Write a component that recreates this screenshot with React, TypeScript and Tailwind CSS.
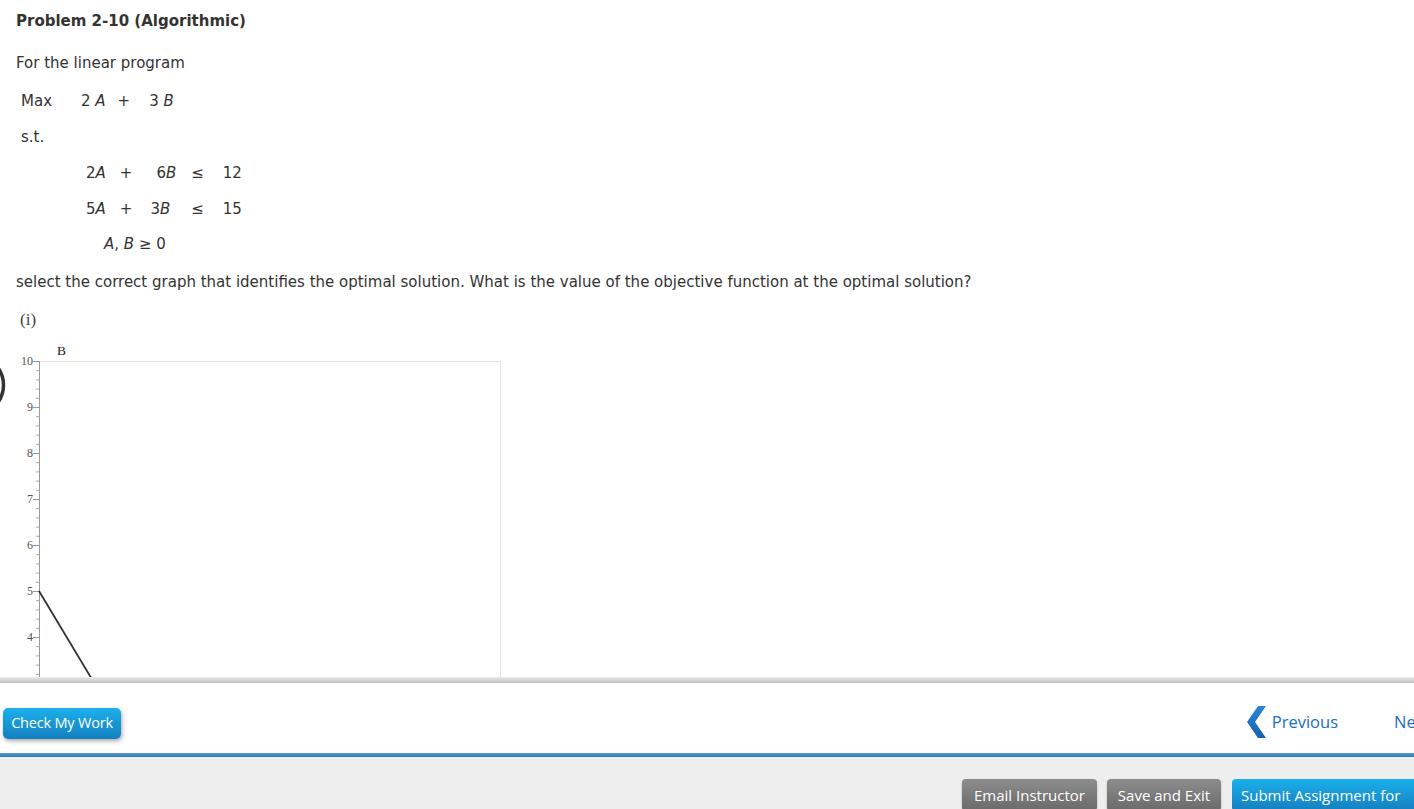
import React from "react";

const verdana = { fontFamily: '"DejaVu Sans", Verdana, sans-serif' };

function Graph() {
  const unit = 46;
  const y0 = 21;
  const yFor = (v: number) => y0 + (10 - v) * unit;
  const majors = [10, 9, 8, 7, 6, 5, 4];
  const minors: number[] = [];
  for (let i = 0; i <= 50; i++) minors.push(y0 + i * (unit / 5));
  return (
    <svg width="510" height="340" className="block" style={{ overflow: "hidden" }}>
      <circle cx={-26.5} cy={45} r={30} fill="none" stroke="#333" strokeWidth={3.5} />
      <line x1={40} y1={y0 + 0.5} x2={500} y2={y0 + 0.5} stroke="#e4e4e4" strokeWidth={1} />
      <line x1={500.5} y1={y0} x2={500.5} y2={340} stroke="#e2e2e2" strokeWidth={1} />
      <line x1={39.5} y1={y0} x2={39.5} y2={340} stroke="#9a9a9a" strokeWidth={1} />
      {minors.map((y, i) => (
        <line key={i} x1={36} y1={y + 0.5} x2={39} y2={y + 0.5} stroke="#a8a8a8" strokeWidth={1} />
      ))}
      {[...majors, 3].map((v) => (
        <line key={"t" + v} x1={33} y1={yFor(v) + 0.5} x2={39} y2={yFor(v) + 0.5} stroke="#9a9a9a" strokeWidth={1} />
      ))}
      {majors.map((v) => (
        <text
          key={v}
          x={33}
          y={yFor(v) + 4}
          textAnchor="end"
          fontSize={12}
          fill="#555"
          fontFamily='"Liberation Serif", "Times New Roman", serif'
        >
          {v}
        </text>
      ))}
      <text x={57} y={15} fontSize={13.5} fill="#222" fontFamily='"Liberation Serif", "Times New Roman", serif'>
        B
      </text>
      <line x1={39} y1={yFor(5)} x2={39 + 3 * unit} y2={yFor(0)} stroke="#333" strokeWidth={1.8} />
    </svg>
  );
}

function ChevronLeft() {
  return (
    <svg width="19" height="32" viewBox="0 0 19 32" className="block">
      <defs>
        <linearGradient id="chev" x1="0" y1="0" x2="0" y2="1">
          <stop offset="0" stopColor="#2a86d8" />
          <stop offset="1" stopColor="#1560b4" />
        </linearGradient>
      </defs>
      <polygon points="11,0 19,0 8,16 19,32 11,32 0,16" fill="url(#chev)" />
    </svg>
  );
}

function ChevronRight() {
  return (
    <svg width="19" height="32" viewBox="0 0 19 32" className="block">
      <polygon points="0,0 8,0 19,16 8,32 0,32 11,16" fill="#1a6ec4" />
    </svg>
  );
}

export default function App() {
  const btnFont = { fontFamily: '"Open Sans", "Noto Sans", sans-serif' };
  return (
    <div className="w-[1414px] h-[809px] overflow-hidden bg-white flex flex-col">
      {/* Content */}
      <div className="h-[677px] overflow-hidden text-[#333] text-[15px]" style={verdana}>
        <div className="pl-[16px]">
          <div className="pt-[11px] text-[15px] leading-[20px] font-bold">Problem 2-10 (Algorithmic)</div>
          <div className="mt-[22px] leading-[20px]">For the linear program</div>
          <div className="mt-[18px] leading-[20px] flex pl-[5px] whitespace-pre">
            <span>Max</span>
            <span className="ml-[29px]">
              2 <i>A</i>
            </span>
            <span className="ml-[12px]">+</span>
            <span className="ml-[19px]">
              3 <i>B</i>
            </span>
          </div>
          <div className="mt-[16px] leading-[20px] pl-[5px]">s.t.</div>
          <div className="mt-[16px] leading-[20px] flex pl-[70px]">
            <span>
              2<i>A</i>
            </span>
            <span className="ml-[14px]">+</span>
            <span className="ml-[24px]">
              6<i>B</i>
            </span>
            <span className="ml-[15px]">≤</span>
            <span className="ml-[19px]">12</span>
          </div>
          <div className="mt-[16px] leading-[20px] flex pl-[70px]">
            <span>
              5<i>A</i>
            </span>
            <span className="ml-[14px]">+</span>
            <span className="ml-[18px]">
              3<i>B</i>
            </span>
            <span className="ml-[21px]">≤</span>
            <span className="ml-[19px]">15</span>
          </div>
          <div className="mt-[15px] leading-[20px] pl-[88px]">
            <i>A</i>, <i>B</i> ≥ 0
          </div>
          <div className="mt-[18px] leading-[20px]">
            select the correct graph that identifies the optimal solution. What is the value of the objective function
            at the optimal solution?
          </div>
          <div
            className="mt-[18px] leading-[20px] pl-[4px] text-[17px] text-[#444]"
            style={{ fontFamily: '"Liberation Serif", "Times New Roman", serif' }}
          >
            (i)
          </div>
        </div>
        <div className="mt-[10px]">
          <Graph />
        </div>
      </div>

      {/* Shadow band */}
      <div className="h-[6px] bg-gradient-to-b from-[#ececec] to-[#bdbdbd]" />

      {/* White toolbar */}
      <div className="h-[70px] bg-white flex items-center overflow-hidden" style={btnFont}>
        <button className="ml-[3px] mt-[10px] h-[31px] w-[118px] rounded-[5px] bg-gradient-to-b from-[#1bb0ec] to-[#157fbf] text-white text-[14.5px] tracking-[-0.2px] shadow-[1px_2px_4px_rgba(0,0,0,0.35)] shrink-0">
          Check My Work
        </button>
        <div className="ml-auto flex items-center shrink-0 mt-[8px]">
          <ChevronLeft />
          <span className="ml-[6px] text-[16.5px] text-[#1a6ec4]">Previous</span>
        </div>
        <div className="ml-[56px] w-[20px] overflow-hidden shrink-0 mt-[8px] flex items-center whitespace-nowrap">
          <span className="text-[16.5px] text-[#1a6ec4]">Next</span>
          <span className="ml-[7px]">
            <ChevronRight />
          </span>
        </div>
      </div>

      {/* Blue rule */}
      <div className="h-[4px] bg-gradient-to-b from-[#5a9cc4] to-[#2f7bb0]" />

      {/* Gray bottom bar */}
      <div className="flex-1 bg-[#eeeeee] overflow-hidden" style={btnFont}>
        <div className="flex justify-end items-start pt-[22px] gap-[10px] whitespace-nowrap">
          <button className="h-[32px] w-[135px] rounded-[4px] bg-gradient-to-b from-[#8d8d8d] to-[#6a6a6a] text-white text-[15px] shrink-0 shadow-[0_1px_2px_rgba(0,0,0,0.3)]">
            Email Instructor
          </button>
          <button className="h-[32px] w-[114px] rounded-[4px] bg-gradient-to-b from-[#8d8d8d] to-[#6a6a6a] text-white text-[15px] shrink-0 shadow-[0_1px_2px_rgba(0,0,0,0.3)]">
            Save and Exit
          </button>
          <button className="ml-[1px] h-[32px] w-[182px] rounded-l-[4px] bg-gradient-to-b from-[#1bb0ec] to-[#157fbf] text-white text-[15px] shrink-0 text-left pl-[9px] overflow-hidden">
            Submit Assignment for
          </button>
        </div>
      </div>
    </div>
  );
}
